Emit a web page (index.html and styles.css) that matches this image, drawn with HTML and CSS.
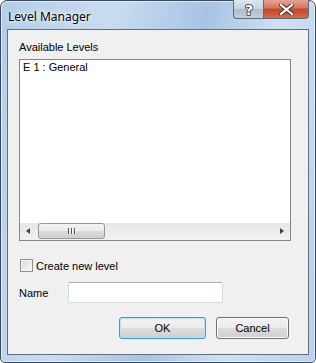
FILE: index.html
```html
<!DOCTYPE html>
<html lang="en">
<head>
  <meta charset="UTF-8">
  <title>Level Manager</title>
  <link rel="stylesheet" href="styles.css">
</head>
<body>

  <div class="window">
    <div class="titlebar">
      <div class="title">Level Manager</div>
      <div class="caption-buttons">
        <div class="cap-btn help">
          <svg width="14" height="15" viewBox="0 0 14 15">
            <text x="7" y="13" text-anchor="middle" font-family="DejaVu Sans, sans-serif" font-weight="bold" font-size="14" fill="#ffffff" stroke="#2f3c4a" stroke-width="1.6" paint-order="stroke">?</text>
          </svg>
        </div>
        <div class="cap-btn close">
          <svg width="15" height="11" viewBox="0 0 15 11">
            <path d="M2 1 L13 10 M13 1 L2 10" stroke="#3b2b2b" stroke-width="4" stroke-linecap="square"/>
            <path d="M2 1 L13 10 M13 1 L2 10" stroke="#ffffff" stroke-width="2.2" stroke-linecap="square"/>
          </svg>
        </div>
      </div>
    </div>

    <div class="client">
      <div class="label">Available Levels</div>
      <div class="listbox">
        <div class="items">
          <div class="item">E 1 : General</div>
        </div>
        <div class="hscroll">
          <div class="arrow left"></div>
          <div class="track">
            <div class="thumb"><span class="grip"></span><span class="grip"></span><span class="grip"></span></div>
          </div>
          <div class="arrow right"></div>
        </div>
      </div>

      <div class="check-row">
        <span class="checkbox"></span>
        <span>Create new level</span>
      </div>

      <div class="name-row">
        <span class="name-label">Name</span>
        <input type="text" class="name-input">
      </div>

      <div class="button-row">
        <button class="btn default">OK</button>
        <button class="btn">Cancel</button>
      </div>
    </div>
  </div>

</body>
</html>
```

FILE: styles.css
```css
body {
  margin: 0;
  background: #ffffff;
  font-family: "Liberation Sans", Arial, sans-serif;
  font-size: 11px;
  color: #000;
}
.window {
  width: 316px;
  height: 363px;
  box-sizing: border-box;
  border: 1px solid #3a4a5c;
  border-radius: 7px 7px 5px 5px;
  padding: 0 6px 6px 6px;
  background: linear-gradient(100deg, #b4cde8 0%, #c9dcf1 30%, #a8c4e4 55%, #cfe0f2 75%, #b9d1ec 100%);
  box-shadow: inset 0 0 0 1px rgba(255,255,255,0.55);
}
.titlebar {
  height: 28px;
  display: flex;
  justify-content: space-between;
  align-items: flex-start;
}
.title {
  font-family: "Noto Sans", "Open Sans", sans-serif;
  font-size: 12px;
  padding: 7px 0 0 1px;
  text-shadow: 0 0 6px #fff, 0 0 3px #fff;
}
.caption-buttons {
  display: flex;
  margin-top: -1px;
}
.cap-btn {
  height: 19px;
  box-sizing: border-box;
  border: 1px solid #5e6b7a;
  border-top: none;
  display: flex;
  align-items: center;
  justify-content: center;
}
.help {
  width: 30px;
  border-radius: 0 0 0 4px;
  border-right: none;
  background: linear-gradient(#dde6ef 0%, #c6d3e0 50%, #aebccb 51%, #c3d0dd 100%);
}
.close {
  width: 46px;
  border-radius: 0 0 4px 0;
  background: linear-gradient(#e8a493 0%, #d7735f 45%, #c3452d 50%, #d36a4d 100%);
}
.client {
  height: 326px;
  box-sizing: border-box;
  border: 1px solid #5f6e80;
  background: #f0f0f0;
  padding: 11px 17px 0 11px;
}
.label {
  line-height: 13px;
}
.listbox {
  margin-top: 5px;
  width: 272px;
  height: 182px;
  box-sizing: border-box;
  border: 1px solid #828790;
  background: #fff;
  display: flex;
  flex-direction: column;
}
.items {
  flex: 1;
  padding: 1px 3px;
}
.item {
  line-height: 13px;
}
.hscroll {
  height: 17px;
  display: flex;
  background: linear-gradient(to bottom, #e6e6e6, #f2f2f2);
}
.arrow {
  width: 17px;
  position: relative;
}
.arrow::after {
  content: "";
  position: absolute;
  top: 5px;
  border-top: 3.5px solid transparent;
  border-bottom: 3.5px solid transparent;
}
.arrow.left::after {
  left: 6px;
  border-right: 4px solid #3f3f3f;
}
.arrow.right::after {
  left: 7px;
  border-left: 4px solid #3f3f3f;
}
.track {
  flex: 1;
  padding: 0 1px;
}
.thumb {
  width: 67px;
  height: 16px;
  box-sizing: border-box;
  border: 1px solid #979797;
  border-radius: 3px;
  background: linear-gradient(to bottom, #f2f2f2 0%, #ebebeb 50%, #dbdbdb 51%, #cfcfcf 100%);
  display: flex;
  justify-content: center;
  align-items: center;
  gap: 2px;
}
.grip {
  width: 1px;
  height: 6px;
  background: #555;
  box-shadow: 1px 0 0 #fff;
}
.check-row {
  margin-top: 18px;
  height: 13px;
  display: flex;
  align-items: center;
  gap: 3px;
  padding-left: 1px;
}
.checkbox {
  width: 13px;
  height: 13px;
  box-sizing: border-box;
  border: 1px solid #8e8f8f;
  background: linear-gradient(135deg, #dcdcdc, #f7f7f7);
  box-shadow: inset 0 0 0 1px #f4f4f4;
}
.name-row {
  margin-top: 10px;
  display: flex;
  align-items: center;
}
.name-label {
  width: 49px;
}
.name-input {
  width: 155px;
  height: 21px;
  margin: 0;
  padding: 0 2px;
  box-sizing: border-box;
  border: 1px solid #d5dbe2;
  border-top-color: #abadb3;
  border-radius: 2px;
  background: #fff;
  font: inherit;
}
.button-row {
  margin-top: 14px;
  margin-right: 2px;
  display: flex;
  justify-content: flex-end;
  gap: 10px;
}
.btn {
  width: 73px;
  height: 22px;
  margin: 0;
  padding: 0;
  box-sizing: border-box;
  border: 1px solid #707070;
  border-radius: 3px;
  background: linear-gradient(to bottom, #f2f2f2 0%, #ebebeb 50%, #dddddd 51%, #cfcfcf 100%);
  box-shadow: inset 0 0 0 1px #fcfcfc;
  font: inherit;
  color: #000;
}
.btn.default {
  width: 87px;
  border-color: #3c9ad8;
  box-shadow: inset 0 0 0 1px #b6e3fa;
}
```
